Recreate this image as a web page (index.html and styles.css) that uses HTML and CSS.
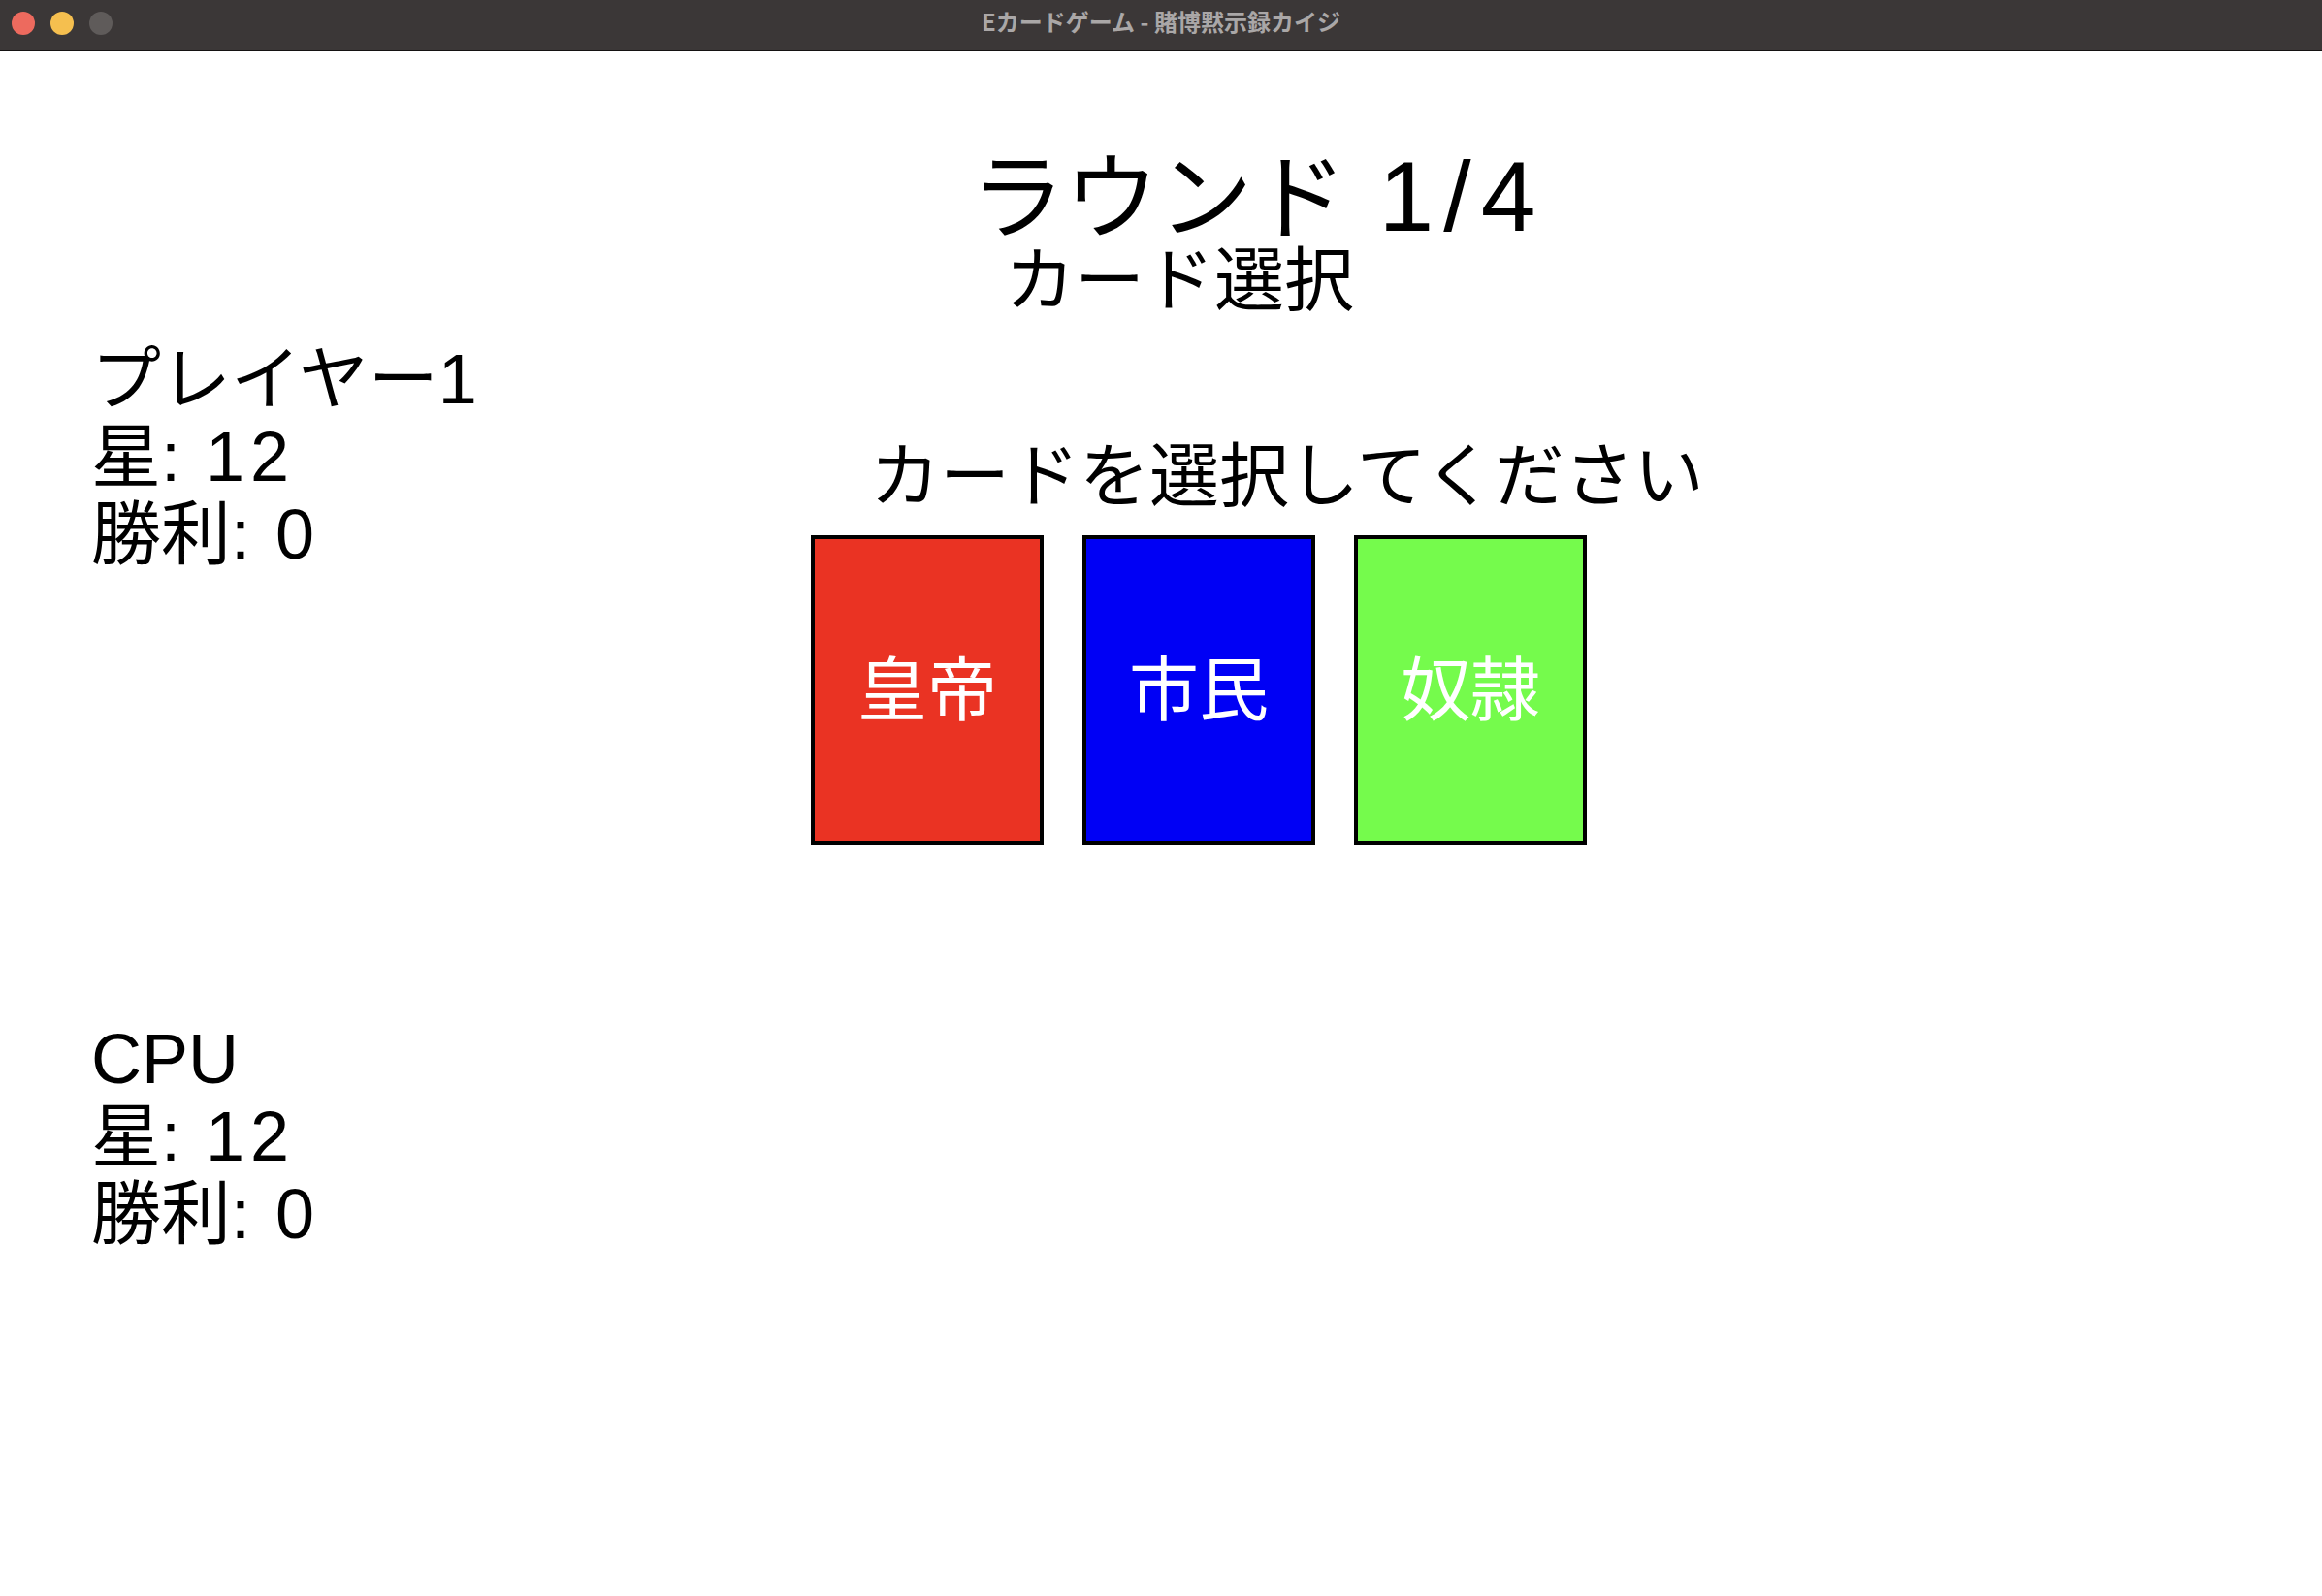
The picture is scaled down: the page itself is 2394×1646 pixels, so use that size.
FILE: index.html
```html
<!DOCTYPE html>
<html lang="ja">
<head>
<meta charset="utf-8">
<title>Eカードゲーム - 賭博黙示録カイジ</title>
<link rel="stylesheet" href="styles.css">
</head>
<body>
<div class="window">
  <div class="titlebar">
    <div class="lights">
      <span class="light light-close"></span>
      <span class="light light-min"></span>
      <span class="light light-max"></span>
    </div>
    <div class="window-title">Eカードゲーム - 賭博黙示録カイジ</div>
    <div class="titlebar-spacer"></div>
  </div>
  <main class="stage">
    <header class="round">
      <div class="round-title">ラウンド <span class="fraction">1/4</span></div>
      <div class="round-phase">カード選択</div>
    </header>
    <section class="board">
      <aside class="players">
        <div class="player player-human">
          <div class="line">プレイヤー1</div>
          <div class="line">星: <span class="num">12</span></div>
          <div class="line">勝利: <span class="num">0</span></div>
        </div>
        <div class="player player-cpu">
          <div class="line">CPU</div>
          <div class="line">星: <span class="num">12</span></div>
          <div class="line">勝利: <span class="num">0</span></div>
        </div>
      </aside>
      <div class="play">
        <div class="prompt">カードを選択してください</div>
        <div class="cards">
          <div class="card card-emperor">皇帝</div>
          <div class="card card-citizen">市民</div>
          <div class="card card-slave">奴隷</div>
        </div>
      </div>
    </section>
  </main>
</div>
</body>
</html>
```
FILE: styles.css
```css
html, body {
  margin: 0;
  padding: 0;
  background: #ffffff;
}

body {
  font-family: "Liberation Sans", "Noto Sans CJK JP", sans-serif;
  color: #000000;
}

.window {
  width: 2394px;
  height: 1646px;
  overflow: hidden;
  background: #ffffff;
}

.titlebar {
  height: 52px;
  border-bottom: 1px solid #141212;
  background: #3b3737;
  display: grid;
  grid-template-columns: 1fr auto 1fr;
  align-items: center;
  font-family: "Noto Sans CJK JP", sans-serif;
}

.lights {
  display: flex;
  gap: 16px;
  padding-left: 12px;
  padding-bottom: 4px;
}

.light {
  width: 24px;
  height: 24px;
  border-radius: 50%;
  display: block;
}

.light-close { background: #ed6a5e; }
.light-min { background: #f5bf4f; }
.light-max { background: #5f5b5a; }

.window-title {
  font-size: 24px;
  font-weight: 700;
  color: #aaa7a7;
  line-height: 44px;
  padding-bottom: 8px;
  white-space: nowrap;
}

.stage {
  display: flex;
  flex-direction: column;
}

.round {
  padding-top: 103px;
}

.round-title {
  font-size: 97px;
  line-height: 97px;
  text-align: center;
  padding-left: 200px;
  white-space: nowrap;
}

.fraction {
  font-size: 102px;
  line-height: 0;
  letter-spacing: 10px;
  margin-left: 6px;
}

.round-phase {
  font-size: 72px;
  line-height: 72px;
  text-align: center;
  padding-left: 38px;
  white-space: nowrap;
}

.board {
  display: flex;
}

.players {
  flex: 0 0 600px;
  box-sizing: border-box;
  padding-left: 94px;
}

.player-human {
  margin-top: 26px;
}

.player-cpu {
  margin-top: 461px;
}

.line {
  font-size: 72px;
  line-height: 80px;
  white-space: nowrap;
}

.num {
  letter-spacing: 6px;
  margin-left: 6px;
}

.play {
  flex: 1;
}

.prompt {
  margin-top: 126px;
  margin-left: 297px;
  font-size: 72px;
  line-height: 80px;
  white-space: nowrap;
}

.cards {
  margin-top: 21px;
  margin-left: 236px;
  display: flex;
  gap: 40px;
}

.card {
  width: 240px;
  height: 319px;
  box-sizing: border-box;
  border: 4px solid #000000;
  display: flex;
  align-items: center;
  justify-content: center;
  color: #ffffff;
  font-size: 72px;
  line-height: 72px;
}

.card-emperor { background: #ea3323; }
.card-citizen { background: #0000f5; }
.card-slave { background: #75fb4c; }
```
